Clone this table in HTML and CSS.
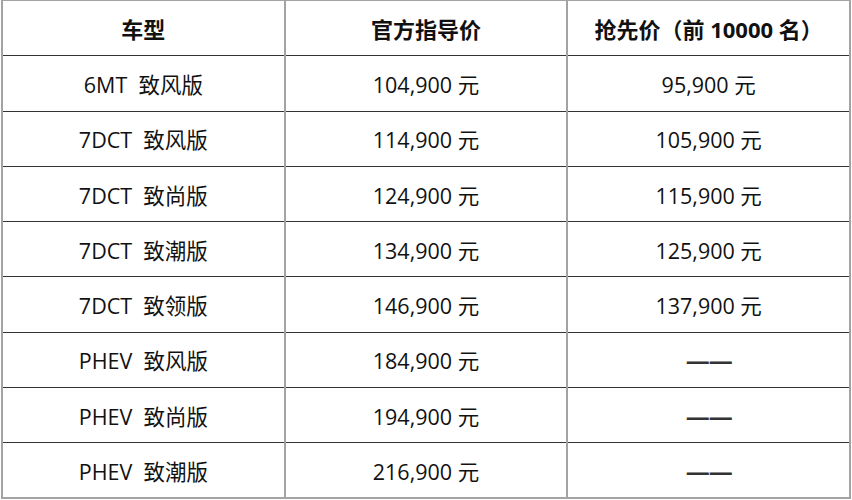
FILE: index.html
```html
<!DOCTYPE html>
<html lang="zh-CN">
<head>
<meta charset="utf-8">
<title>车型价格</title>
<link rel="stylesheet" href="styles.css">
</head>
<body>
<table class="price-table">
  <thead>
    <tr><th>车型</th><th>官方指导价</th><th>抢先价（前 10000 名）</th></tr>
  </thead>
  <tbody>
    <tr><td>6MT&nbsp; 致风版</td><td>104,900 元</td><td>95,900 元</td></tr>
    <tr><td>7DCT&nbsp; 致风版</td><td>114,900 元</td><td>105,900 元</td></tr>
    <tr><td>7DCT&nbsp; 致尚版</td><td>124,900 元</td><td>115,900 元</td></tr>
    <tr><td>7DCT&nbsp; 致潮版</td><td>134,900 元</td><td>125,900 元</td></tr>
    <tr><td>7DCT&nbsp; 致领版</td><td>146,900 元</td><td>137,900 元</td></tr>
    <tr><td>PHEV&nbsp; 致风版</td><td>184,900 元</td><td><span class="dash">——</span></td></tr>
    <tr><td>PHEV&nbsp; 致尚版</td><td>194,900 元</td><td><span class="dash">——</span></td></tr>
    <tr><td>PHEV&nbsp; 致潮版</td><td>216,900 元</td><td><span class="dash">——</span></td></tr>
  </tbody>
</table>
</body>
</html>
```
FILE: styles.css
```css
html, body {
  margin: 0;
  padding: 0;
  background: #ffffff;
}
body {
  padding-left: 1px;
  font-family: "Open Sans", "Noto Sans CJK SC", sans-serif;
  color: #111111;
}
.price-table {
  border-collapse: collapse;
  width: 850px;
  table-layout: fixed;
  border: 2px solid #a3a3a3;
  border-top-width: 1px;
}
.price-table th,
.price-table td {
  height: 55.3px;
  padding: 0;
  box-sizing: border-box;
  text-align: center;
  vertical-align: middle;
  font-size: 21.5px;
  border-left: 2px solid #a3a3a3;
  border-right: 2px solid #a3a3a3;
  border-top: 1px solid #333333;
  border-bottom: 1px solid #333333;
}
.price-table th {
  font-weight: 700;
  font-size: 22px;
}
.price-table td {
  font-weight: 400;
}
.price-table thead tr th {
  border-top: 1px solid #a3a3a3;
}
.price-table tbody tr:last-child td {
  border-bottom: 2px solid #a3a3a3;
}
.dash {
  display: inline-block;
  font-size: 24px;
  font-weight: 700;
  letter-spacing: -1px;
  color: #333333;
}
```
